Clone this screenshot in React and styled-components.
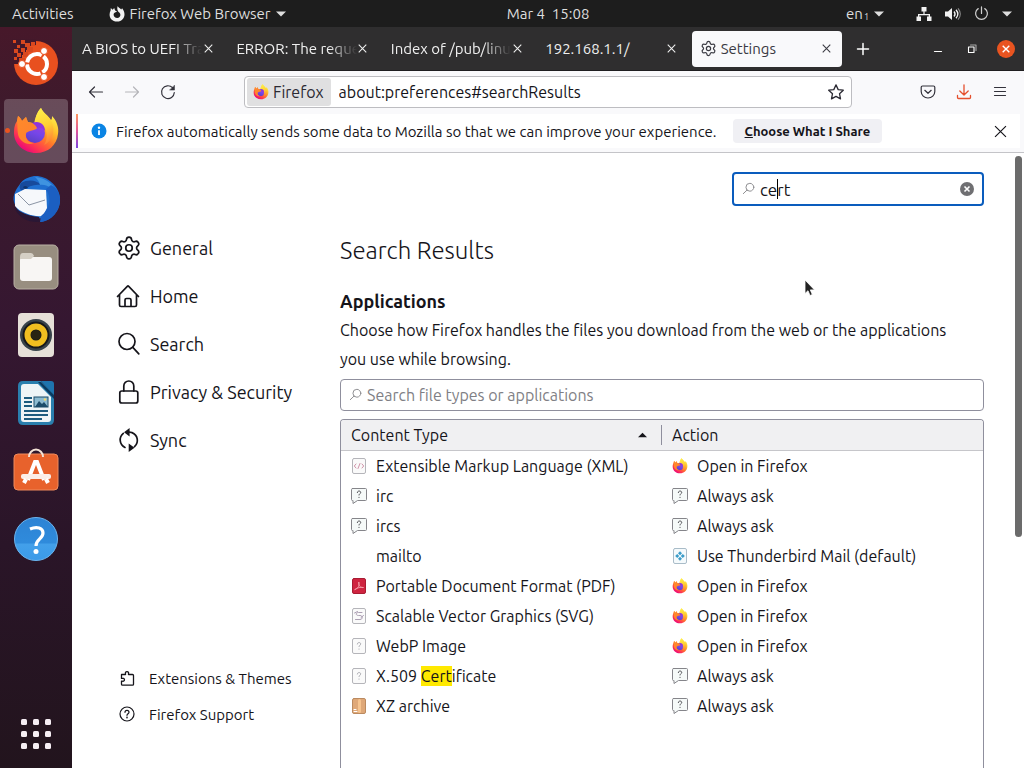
import React, { useState } from "react";
import styled, { createGlobalStyle } from "styled-components";
import { Settings } from "lucide-react";

const GlobalStyle = createGlobalStyle`
  * {
    box-sizing: border-box;
  }

  body {
    margin: 0;
    font-family: Ubuntu, "Noto Sans", "Open Sans", sans-serif;
    font-size: 16px;
    color: #15141a;
  }

  button, input {
    font: inherit;
    color: inherit;
  }

  button {
    border: 0;
    padding: 0;
    background: none;
    cursor: default;
  }

  svg {
    display: block;
    flex-shrink: 0;
  }
`;

/* ---------- layout ---------- */

const Desktop = styled.div`
  height: 100vh;
  display: flex;
  flex-direction: column;
  overflow: hidden;
  background: #1d1d1d;
`;

const Workspace = styled.div`
  flex: 1;
  min-height: 0;
  display: flex;
`;

/* ---------- top panel ---------- */

const TopPanel = styled.header`
  height: 27px;
  flex-shrink: 0;
  display: flex;
  align-items: center;
  padding: 0 12px;
  font-size: 15px;
  color: #dedede;
  background: #1d1d1d;
`;

const PanelStart = styled.div`
  flex: 1 1 72px;
  display: flex;
  align-items: center;
  gap: 35px;
`;

const PanelEnd = styled.div`
  flex: 1 1 0;
  display: flex;
  align-items: center;
  justify-content: flex-end;
  gap: 32px;
`;

const PanelButton = styled.button`
  display: flex;
  align-items: center;
  gap: ${(props) => props.$gap || 5}px;
  white-space: pre;
`;

const Sub = styled.span`
  font-size: 9px;
  align-self: flex-end;
  margin-left: -4px;
`;

/* ---------- dock ---------- */

const Dock = styled.nav`
  width: 72px;
  flex-shrink: 0;
  display: flex;
  flex-direction: column;
  align-items: center;
  gap: 4px;
  padding: 4px 4px 2px;
  background: linear-gradient(#47182a 0, #3d1a2c 12%, #351731 40%, #2a1528 70%, #22141d 100%);
`;

const DockItem = styled.button`
  position: relative;
  width: 64px;
  height: 64px;
  display: flex;
  align-items: center;
  justify-content: center;
  border-radius: 4px;
  background: ${(props) => (props.$active ? "rgba(255, 255, 255, 0.22)" : "none")};
  margin-top: ${(props) => (props.$last ? "auto" : "0")};
`;

const RunningDot = styled.span`
  position: absolute;
  left: 1px;
  top: 29px;
  width: 5px;
  height: 5px;
  border-radius: 50%;
  background: #e95420;
`;

/* ---------- browser chrome ---------- */

const BrowserWindow = styled.div`
  flex: 1;
  min-width: 0;
  display: flex;
  flex-direction: column;
  background: #f9f9fb;
`;

const TabBar = styled.div`
  height: 44px;
  flex-shrink: 0;
  display: flex;
  align-items: center;
  padding: 0 9px 0 2px;
  background: #2f2e2f;
  border-bottom: 1px solid #1f1e20;
`;

const Tabs = styled.div`
  flex: 1;
  min-width: 0;
  display: flex;
  gap: 4px;
`;

const Tab = styled.div`
  flex: 1 1 0;
  min-width: 0;
  height: 36px;
  display: flex;
  align-items: center;
  padding: 0 10px 0 8px;
  border-radius: 4px;
  font-size: 15px;
  color: ${(props) => (props.$active ? "#3a3a42" : "#f0f0f0")};
  background: ${(props) => (props.$active ? "#f9f9fb" : "none")};
`;

const TabLabel = styled.span`
  flex: 1;
  min-width: 0;
  margin-left: ${(props) => (props.$indent ? "4px" : "0")};
  overflow: hidden;
  white-space: nowrap;
  mask-image: ${(props) =>
    props.$fade ? "linear-gradient(to left, transparent, #000 28px)" : "none"};
`;

const IconButton = styled.button`
  width: ${(props) => props.$size || 16}px;
  height: ${(props) => props.$size || 16}px;
  display: flex;
  align-items: center;
  justify-content: center;
  flex-shrink: 0;
`;

const NewTab = styled(IconButton)`
  margin: 0 58px 0 13px;
`;

const WindowControls = styled.div`
  display: flex;
  align-items: center;
  gap: 16px;
`;

const Toolbar = styled.div`
  height: 41px;
  flex-shrink: 0;
  display: flex;
  align-items: center;
  gap: 20px;
  padding: 0 16px;
  color: #33323b;
`;

const UrlBar = styled.div`
  flex: 1;
  min-width: 0;
  height: 32px;
  display: flex;
  align-items: center;
  margin: 0 48px;
  padding: 0 7px 0 2px;
  background: #fff;
  border: 1px solid #bdbdc1;
  border-radius: 4px;
`;

const Identity = styled.button`
  height: 28px;
  display: flex;
  align-items: center;
  gap: 4px;
  padding: 0 7px 0 6px;
  border-radius: 3px;
  background: #e0e0e1;
  font-size: 16px;
  color: #2b2a33;
`;

const UrlInput = styled.input`
  flex: 1;
  min-width: 0;
  padding: 0 8px;
  border: 0;
  outline: 0;
  background: none;
  font-size: 16px;
  color: #15141a;
`;

const Notification = styled.div`
  height: 34px;
  flex-shrink: 0;
  display: flex;
  align-items: center;
  margin: 2px 4px 4px;
  padding: 0 12px 0 13px;
  border-left: 2px solid;
  border-image: linear-gradient(#ff9a5a, #e0559a 50%, #7542e5) 1;
  background: #fff;
  font-size: 15px;
`;

const NotificationText = styled.span`
  margin: 0 16px 0 9px;
  white-space: nowrap;
`;

const NotificationButton = styled.button`
  height: 24px;
  padding: 0 12px;
  margin-right: auto;
  border-radius: 4px;
  background: #f0f0f4;
  font-size: 13px;
  font-weight: 700;
  white-space: nowrap;

  &::first-letter {
    text-decoration: underline;
  }
`;

/* ---------- preferences page ---------- */

const Page = styled.div`
  position: relative;
  flex: 1;
  min-height: 0;
  display: flex;
  overflow: hidden;
  border-top: 1px solid #c4c4c8;
  background: #fff;
`;

const ScrollThumb = styled.div`
  position: absolute;
  top: 3px;
  right: 2px;
  width: 7px;
  height: 62%;
  border-radius: 4px;
  background: #6b6b6b;
`;

const Sidebar = styled.nav`
  width: 268px;
  flex-shrink: 0;
  display: flex;
  flex-direction: column;
  justify-content: space-between;
  padding: 71px 0 36px 44px;
`;

const LinkList = styled.div`
  display: flex;
  flex-direction: column;
`;

const CategoryLink = styled.a`
  height: 48px;
  display: flex;
  align-items: center;
  gap: 8px;
  font-size: 18px;
  color: inherit;
  text-decoration: none;
`;

const FooterLink = styled.a`
  height: 36px;
  display: flex;
  align-items: center;
  gap: 14px;
  padding-left: 3px;
  font-size: 15px;
  color: inherit;
  text-decoration: none;
`;

const Main = styled.main`
  flex: 1;
  min-width: 0;
  display: flex;
  flex-direction: column;
  margin-right: 40px;
  padding-top: 19px;
`;

const SearchField = styled.label`
  position: relative;
  width: 252px;
  height: 34px;
  align-self: flex-end;
  display: flex;
  align-items: center;
  padding: 0 7px 0 8px;
  border: 2px solid #0a5cbd;
  border-radius: 4px;
`;

const FieldInput = styled.input`
  flex: 1;
  min-width: 0;
  padding: 0 4px;
  border: 0;
  outline: 0;
  background: none;
  font-size: ${(props) => (props.$large ? "17px" : "16px")};

  &::placeholder {
    color: #7f7f85;
    opacity: 1;
  }
`;

const TextCaret = styled.span`
  position: absolute;
  left: 43px;
  top: 5px;
  width: 1px;
  height: 20px;
  background: #000;
`;

const PageTitle = styled.h1`
  margin: 29px 0 0;
  font-size: 24px;
  font-weight: 300;
  line-height: 32px;
`;

const SectionTitle = styled.h2`
  margin: 21px 0 0;
  font-size: 18px;
  font-weight: 700;
  line-height: 26px;
`;

const Description = styled.p`
  margin: 2px 0 5px;
  padding-right: 24px;
  font-size: 16px;
  line-height: 29px;
`;

const FilterField = styled.label`
  height: 32px;
  flex-shrink: 0;
  display: flex;
  align-items: center;
  padding: 0 8px;
  border: 1px solid #8f8f9d;
  border-radius: 4px;
`;

const TableFrame = styled.div`
  flex: 1;
  min-height: 0;
  margin-top: 8px;
  border: 1px solid #8f8f9d;
  border-bottom: 0;
  border-radius: 4px 4px 0 0;
  overflow: hidden;
`;

const HandlersTable = styled.table`
  width: 100%;
  border-collapse: separate;
  border-spacing: 0;
  table-layout: fixed;
`;

const HeadCell = styled.th`
  height: 31px;
  padding: 0 0 0 10px;
  border-bottom: 1px solid #c6c6ca;
  background: #f0f0f2;
  font-weight: 400;
  text-align: left;
`;

const SortHeader = styled.div`
  height: 20px;
  display: flex;
  align-items: center;
  justify-content: space-between;
  padding-right: 14px;
  border-right: 1px solid #8f8f9d;
`;

const Cell = styled.td`
  height: 30px;
  padding: 0 0 0 10px;
`;

const CellContent = styled.div`
  display: flex;
  align-items: center;
  gap: 9px;
  height: 20px;
  line-height: 20px;
  white-space: nowrap;
`;

const IconSlot = styled.span`
  width: 16px;
  height: 16px;
  flex-shrink: 0;
`;

const Highlight = styled.mark`
  padding: 1px 0;
  color: inherit;
  background: #ffe900;
`;

const Pointer = styled.div`
  position: fixed;
  left: 804px;
  top: 279px;
  pointer-events: none;
`;

/* ---------- icons ---------- */

const FirefoxLogo = ({ size, id }) => (
  <svg width={size} height={size} viewBox="0 0 48 48" aria-hidden="true">
    <defs>
      <linearGradient id={`${id}-body`} x1="0.85" y1="0.1" x2="0.25" y2="0.95">
        <stop offset="0" stopColor="#fff44f" />
        <stop offset="0.3" stopColor="#ffc02c" />
        <stop offset="0.55" stopColor="#ff7a2a" />
        <stop offset="0.8" stopColor="#ff3750" />
        <stop offset="1" stopColor="#eb0878" />
      </linearGradient>
      <linearGradient id={`${id}-globe`} x1="0.7" y1="0" x2="0.3" y2="1">
        <stop offset="0" stopColor="#a03be1" />
        <stop offset="0.5" stopColor="#7546e8" />
        <stop offset="1" stopColor="#5a3fc4" />
      </linearGradient>
      <linearGradient id={`${id}-ear`} x1="0" y1="0" x2="1" y2="1">
        <stop offset="0" stopColor="#ff8a2a" />
        <stop offset="1" stopColor="#ff8030" />
      </linearGradient>
      <linearGradient id={`${id}-flame`} x1="0.4" y1="0" x2="0.6" y2="1">
        <stop offset="0" stopColor="#fff04a" />
        <stop offset="0.5" stopColor="#ffd034" />
        <stop offset="1" stopColor="#ff7a38" />
      </linearGradient>
    </defs>
    <path
      fill={`url(#${id}-body)`}
      d="M29 1c2 5 7 7 10 12 1-1 1-2 1-4 5 5 7 12 6 18C45 38 36 46 24 46S2 37 2 26c0-6 1-9 3-12l1-5c2 1 3 3 4 5l4-4 2 5c3 0 5 1 7 2 0-6 2-12 6-16z"
    />
    <circle cx="23" cy="26" r="10" fill={`url(#${id}-globe)`} />
    <path
      fill={`url(#${id}-flame)`}
      d="M29 1c2 5 7 7 10 13 5 9 2 20-7 24 4-6 4-14-1-19-2-2-5-2-9-2 1-6 3-12 7-16z"
    />
    <path fill="#8f35dc" d="M20 16c7-3 13 1 13 8-2-3-4-4-8-3-1-2-3-4-5-5z" />
    <path
      fill={`url(#${id}-ear)`}
      d="M5 14l1-5c2 1 3 3 4 5l4-4 2 6c4-1 7 1 9 5-1 2-5 2-7 3-2 1-4 1-4 3-1 5 3 9 8 9-7 3-15-2-16-9-1-5 0-8-1-13z"
    />
  </svg>
);

const FirefoxMono = () => (
  <svg width="16" height="16" viewBox="0 0 16 16" aria-hidden="true">
    <path
      fill="#f2f2f2"
      d="M8.800 0c.2 1.600 2.200 2 3.400 3.600l.9-1.400c4.600 5 2.400 13.400-5 13.400C1.500 15.600-1 9.500 1.600 4.500L1.800 2l1.800 1.700L5.200 2l.9 2.600 1.900.8c-.6 1-2.400.6-3 1.800-1.200 2.300.6 4.700 3.200 4.700 3.400 0 4.300-4 1.700-5.600C8.300 5 7.800 2 8.800 0z"
    />
  </svg>
);

const Caret = ({ up, size = 10 }) => (
  <svg width={size} height="6" viewBox="0 0 10 6" aria-hidden="true">
    <path fill="currentColor" d={up ? "M0 5.5h10L5 .5z" : "M0 .5h10L5 5.5z"} />
  </svg>
);

const Cross = ({ size = 9, width = 1.2 }) => (
  <svg width={size} height={size} viewBox="0 0 10 10" aria-hidden="true">
    <path d="M.8.8l8.4 8.4M9.2.8L.8 9.2" fill="none" stroke="currentColor" strokeWidth={width} />
  </svg>
);

// line icons share stroke settings
const LineIcon = ({ size = 16, box = 16, width = 1.2, color = "currentColor", children }) => (
  <svg
    width={size}
    height={size}
    viewBox={`0 0 ${box} ${box}`}
    fill="none"
    stroke={color}
    strokeWidth={width}
    strokeLinecap="round"
    strokeLinejoin="round"
    aria-hidden="true"
  >
    {children}
  </svg>
);

const NetworkIcon = () => (
  <svg width="16" height="14" viewBox="0 0 16 14" fill="#f2f2f2" aria-hidden="true">
    <path d="M5.500 0h5v4.500H8.600V7H14v2.500h1.500V14h-4.500V9.500h1.700V8.300H3.300v1.200H5V14H.5V9.500H2V7h5.400V4.500H5.500z" />
  </svg>
);

const VolumeIcon = () => (
  <svg width="16" height="14" viewBox="0 0 16 14" aria-hidden="true">
    <path fill="#f2f2f2" d="M0 4.500h3L7 1v12L3 9.500H0z" />
    <path
      d="M9 4.500c1.300 1.500 1.300 3.500 0 5M11 2.800c2.300 2.600 2.300 5.800 0 8.400"
      fill="none"
      stroke="#f2f2f2"
      strokeWidth="1.300"
    />
    <path d="M13 1.300c3 3.500 3 8 0 11.400" fill="none" stroke="#8a8a8a" strokeWidth="1.200" />
  </svg>
);

const PowerIcon = () => (
  <LineIcon size={15} color="#d0d0d0" width={1.3}>
    <path d="M8 1v7M4.500 2.800a6.300 6.300 0 1 0 7 0" />
  </LineIcon>
);

const UbuntuLogo = () => (
  <svg width="48" height="48" viewBox="0 0 48 48" aria-hidden="true">
    <circle cx="24" cy="24" r="22" fill="#e8501f" />
    <path fill="#43182a" d="M0 0h24v6l-6 1v4h-4v5h-4v5l-4 4H0z" />
    <g fill="#d8481f">
      <path d="M1 1h3v3H1zM9 1h4v4H9zM5 6h3v3H5zM13 4h5v4h-5zM19 3h4v4h-4zM2 10h4v4H2zM9 9h4v4H9zM5 14h4v4H5zM15 8h6v5h-6zM11 13h5v5h-5zM2 18h3v3H2zM7 19h6v5H7z" />
    </g>
    <circle
      cx="25"
      cy="25"
      r="10"
      fill="none"
      stroke="#fff"
      strokeWidth="4"
      strokeDasharray="18.940 2"
      strokeDashoffset="9"
    />
    <g fill="#fff" stroke="#e8501f" strokeWidth="1">
      <circle cx="10" cy="25" r="3.500" />
      <circle cx="32" cy="12" r="3.500" />
      <circle cx="32" cy="38" r="3.500" />
    </g>
  </svg>
);

const ThunderbirdLogo = () => (
  <svg width="50" height="50" viewBox="0 0 50 50" aria-hidden="true">
    <path
      fill="#1f6fd0"
      d="M9 10c3-5 9-7 14-8 12-1 25 9 26 22 1 13-9 23-20 24l4-4C18 46 6 40 3 28 1 21 6 14 9 10z"
    />
    <path fill="#174a9c" d="M10 9c7-4 16-3 20 2-6-1-13 1-18 6-4-1-4-5-2-8z" />
    <path fill="#3f93e0" d="M24 3c12 1 22 9 22 21-3-10-11-14-17-13-1-4-3-6-5-8z" />
    <path fill="#f6f8fb" d="M4 20l10-5 21 1 1 18-4 8C20 43 9 38 4 32z" />
    <path d="M7 20l11 11 16-5" fill="none" stroke="#8b95a5" strokeWidth="1" />
    <path fill="#2a1735" d="M3 33c5 5 14 9 25 10l1 5C16 49 7 43 3 33z" />
    <path fill="#1b5fc2" d="M35 15c6 9 4 20-5 27l-1 6c12-1 20-11 20-23 0-7-5-12-9-14z" />
    <path fill="#0e336e" d="M12 13c2-2 4-1 5 1-2 1-4 1-5-1z" />
  </svg>
);

const FilesLogo = () => (
  <svg width="46" height="46" viewBox="0 0 46 46" aria-hidden="true">
    <rect x="1" y="1" width="44" height="44" rx="5" fill="#988e80" stroke="#b9b0a4" />
    <rect x="7" y="13" width="32" height="24" rx="3" fill="#f8f6f4" />
    <path fill="#d5cfc5" d="M7 15v-2q0-4 3-4h8q2 0 3 3l-3 3z" />
  </svg>
);

const RhythmboxLogo = () => (
  <svg width="38" height="46" viewBox="0 0 38 46" aria-hidden="true">
    <rect x="1" y="1" width="36" height="44" rx="4" fill="#e6e0d8" />
    <circle cx="19" cy="23" r="16" fill="#38434a" />
    <circle cx="19" cy="23" r="13.500" fill="#17191b" />
    <circle cx="19" cy="23" r="8.500" fill="none" stroke="#f0bf20" strokeWidth="6" />
    <circle cx="19" cy="23" r="5" fill="#2a2412" />
  </svg>
);

const WriterLogo = () => (
  <svg width="38" height="46" viewBox="0 0 38 46" aria-hidden="true">
    <path fill="#2a7fae" d="M6 1h18l13 13v26q0 5-5 5H6q-5 0-5-5V6q0-5 5-5z" />
    <path fill="#eef4f6" d="M7 4h14l13 13v22q0 3-3 3H7q-3 0-3-3V7q0-3 3-3z" />
    <path fill="#1f74ae" d="M24 1h10q3 0 3 3v11z" />
    <path fill="#0b3a60" d="M21 2h3l13 13v4z" />
    <path
      d="M7 18h8M7 22h8M7 26h8M7 31h24M7 35h24M7 39h18"
      stroke="#1c5b7e"
      strokeWidth="2"
      fill="none"
    />
    <rect x="17" y="17" width="14" height="10" fill="#8dbbd0" stroke="#1c4c69" />
    <path fill="#1c4c69" d="M18 27l4-6 3 3 2-2 4 5z" />
    <circle cx="28" cy="19.500" r="1.300" fill="#f1d770" />
  </svg>
);

const SoftwareLogo = () => (
  <svg width="46" height="46" viewBox="0 0 46 46" aria-hidden="true">
    <rect x="1" y="6" width="44" height="36" rx="4" fill="#e8622c" stroke="#ef8a5c" />
    <path d="M16 9a7 7.500 0 0 1 14 0" fill="none" stroke="#f3e2d6" strokeWidth="2" />
    <path d="M15 32l7-18h2l7 18" fill="none" stroke="#fff" strokeWidth="4" />
    <rect x="8" y="26" width="30" height="5" rx="2" fill="#fbeee8" />
    <path d="M13 31l-2 4M33 31l2 4" stroke="#fff" strokeWidth="4" />
  </svg>
);

const HelpLogo = () => (
  <svg width="46" height="46" viewBox="0 0 46 46" aria-hidden="true">
    <defs>
      <linearGradient id="help-bg" x1="0" y1="0" x2="0" y2="1">
        <stop offset="0" stopColor="#2d83d4" />
        <stop offset="0.600" stopColor="#2f8bdc" />
        <stop offset="0.610" stopColor="#43a0ea" />
        <stop offset="1" stopColor="#3b9ae8" />
      </linearGradient>
    </defs>
    <circle cx="23" cy="23" r="21.500" fill="url(#help-bg)" stroke="#6bb4ee" />
    <path
      d="M17 13c7-3 13-1 13 4 0 6-7 6-7 13"
      fill="none"
      stroke="#fff"
      strokeWidth="3.200"
    />
    <circle cx="23" cy="35.500" r="2.500" fill="#fff" />
  </svg>
);

const AppGridIcon = () => (
  <svg width="32" height="32" viewBox="0 0 32 32" fill="#f6eef4" aria-hidden="true">
    {[1, 13, 25].map((y) =>
      [1, 13, 25].map((x) => <rect key={`${x}-${y}`} x={x} y={y} width="6" height="6" rx="1.500" />)
    )}
  </svg>
);

const StarIcon = () => (
  <LineIcon width={1.3} color="#2b2a33">
    <path d="M8 .9l2.200 4.700 5.100.6-3.800 3.500 1 5.200L8 12.400l-4.500 2.500 1-5.200L.7 6.200l5.100-.6z" />
  </LineIcon>
);

const HomeIcon = () => (
  <LineIcon size={26} box={26} width={1.700}>
    <path d="M1.500 13.500L11.300 3.300q.7-.7 1.400 0l9.800 10.200M3.500 11.500V22q0 1.500 1.500 1.500h14q1.500 0 1.500-1.500V11.500M9 23v-6q0-1.500 1.500-1.500h3Q15 15.500 15 17v6" />
  </LineIcon>
);

const SearchIcon = () => (
  <LineIcon size={26} box={26} width={1.700}>
    <circle cx="11" cy="10.500" r="8" />
    <path d="M16.800 16.300l6 6.500" />
  </LineIcon>
);

const LockIcon = () => (
  <LineIcon size={26} box={26} width={1.700}>
    <rect x="3.800" y="12" width="18" height="12" rx="2" />
    <path d="M7.800 12V7a5 5 0 0 1 10 0v5" />
  </LineIcon>
);

const SyncIcon = () => (
  <LineIcon size={26} box={26} width={1.700}>
    <path d="M7.300 6.400A8.300 8.300 0 0 0 9 20.400M18.500 19.600A8.300 8.300 0 0 0 16 5.600L13 5" />
    <path fill="currentColor" stroke="none" d="M13.600 1v8.400L8 5.200zM12.700 16.600V25l5.800-4.200z" />
  </LineIcon>
);

const PuzzleIcon = () => (
  <LineIcon width={1.300}>
    <path d="M2.500 6.200V4.500h4c.3-.8-.4-1 0-2 .5-1.300 2.500-1.300 3 0 .4 1-.3 1.200 0 2h4q1 0 1 1v8.700q0 1-1 1h-10q-1 0-1-1v-3c.8-.3 1 .4 2 0 1.300-.5 1.300-2.300 0-2.800-1-.4-1.200.3-2 0z" />
  </LineIcon>
);

const QuestionCircle = () => (
  <LineIcon width={1.200}>
    <circle cx="8" cy="8" r="7" />
    <path d="M6 6.300c0-2.600 4-2.600 4 0 0 1.400-2 1.500-2 3" />
    <circle cx="8" cy="11.500" r=".3" />
  </LineIcon>
);

const SmallSearch = () => (
  <LineIcon size={14} width={1.100} color="#8a8a8e">
    <circle cx="9" cy="6" r="4.500" />
    <path d="M5.800 9.200L1.500 13.300" />
  </LineIcon>
);

const AskIcon = () => (
  <LineIcon width={1} color="#85858a">
    <path fill="#f6faf9" d="M1.500.5h13q1 0 1 1v10q0 1-1 1h-8l-4.500 3v-3h-.5q-1 0-1-1v-10q0-1 1-1z" />
    <path stroke="#4a4a50" d="M6.300 4.500c0-2 3.400-2 3.400 0 0 1.200-1.700 1.200-1.700 2.500M8 9.300v.2" />
  </LineIcon>
);

const DocIcon = ({ fill = "#fafafa", stroke = "#b5b5ba", children }) => (
  <LineIcon width={1} color={stroke}>
    <rect x="1.500" y=".5" width="13" height="15" rx="1.500" fill={fill} />
    {children}
  </LineIcon>
);

const fileIcons = {
  xml: (
    <DocIcon>
      <path stroke="#d092a8" d="M5 6L3.300 8 5 10M11 6l1.700 2L11 10M9 5.500l-2 5" />
    </DocIcon>
  ),
  pdf: (
    <DocIcon fill="#cf2440" stroke="#a81c33">
      <path
        stroke="#f6a9b3"
        strokeWidth=".8"
        d="M4 11.500c3-1 5-4 3.800-7.500-.8 3 1.200 6 4.700 5.500-3-.5-6 0-8.500 2z"
      />
    </DocIcon>
  ),
  svg: (
    <DocIcon>
      <path
        stroke="#a394aa"
        strokeWidth=".9"
        d="M11 4.500H7.500c-3 0-3 3 0 3h1.500c3 0 3 4 0 4H4.500M3.500 5l3-1.500M10 9.500l2.500-2"
      />
    </DocIcon>
  ),
  unknown: (
    <DocIcon>
      <path stroke="#a9a9b0" d="M6.300 6c0-2 3.400-2 3.400 0 0 1.200-1.700 1.200-1.700 2.500M8 11v.2" />
    </DocIcon>
  ),
  archive: (
    <DocIcon fill="#dfa878" stroke="#bb8a60">
      <path stroke="#f6c48f" strokeWidth="3" d="M8.500 2.500v11" />
      <path stroke="#fff" d="M3 11.500h2M3 13.500h3" />
    </DocIcon>
  ),
  mail: (
    <DocIcon fill="#f5fafc" stroke="#a9bcc8">
      <path
        fill="#3a9cc9"
        stroke="none"
        d="M8 3.200L10 5.200 8 7.200 6 5.200zM8 8.800l2 2-2 2-2-2zM5.200 6l2 2-2 2-2-2zM10.800 6l2 2-2 2-2-2z"
      />
    </DocIcon>
  ),
  ask: <AskIcon />,
};

/* ---------- data ---------- */

const tabs = ["A BIOS to UEFI Tra", "ERROR: The reque", "Index of /pub/linu", "192.168.1.1/"];

const dockApps = [
  { name: "Ubuntu", icon: <UbuntuLogo /> },
  { name: "Firefox", icon: <FirefoxLogo size={48} id="dock" />, active: true },
  { name: "Thunderbird", icon: <ThunderbirdLogo /> },
  { name: "Files", icon: <FilesLogo /> },
  { name: "Rhythmbox", icon: <RhythmboxLogo /> },
  { name: "Writer", icon: <WriterLogo /> },
  { name: "Software", icon: <SoftwareLogo /> },
  { name: "Help", icon: <HelpLogo /> },
];

const categories = [
  { name: "General", icon: <Settings size={26} strokeWidth={1.6} /> },
  { name: "Home", icon: <HomeIcon /> },
  { name: "Search", icon: <SearchIcon /> },
  { name: "Privacy & Security", icon: <LockIcon /> },
  { name: "Sync", icon: <SyncIcon /> },
];

const handlers = [
  { type: "Extensible Markup Language (XML)", icon: "xml", action: "Open in Firefox" },
  { type: "irc", icon: "ask", action: "Always ask" },
  { type: "ircs", icon: "ask", action: "Always ask" },
  { type: "mailto", action: "Use Thunderbird Mail (default)" },
  { type: "Portable Document Format (PDF)", icon: "pdf", action: "Open in Firefox" },
  { type: "Scalable Vector Graphics (SVG)", icon: "svg", action: "Open in Firefox" },
  { type: "WebP Image", icon: "unknown", action: "Open in Firefox" },
  { type: "X.509 Certificate", icon: "unknown", action: "Always ask" },
  { type: "XZ archive", icon: "archive", action: "Always ask" },
];

const actionIcon = (action, index) => {
  if (action === "Open in Firefox") return <FirefoxLogo size={16} id={`row-${index}`} />;
  if (action === "Always ask") return <AskIcon />;
  return fileIcons.mail;
};

const MarkedText = ({ text, query }) => {
  const start = query ? text.toLowerCase().indexOf(query.toLowerCase()) : -1;
  if (start < 0) return <span>{text}</span>;
  const end = start + query.length;
  return (
    <span>
      {text.slice(0, start)}
      <Highlight>{text.slice(start, end)}</Highlight>
      {text.slice(end)}
    </span>
  );
};

/* ---------- sections ---------- */

const Panel = () => (
  <TopPanel>
    <PanelStart>
      <PanelButton>Activities</PanelButton>
      <PanelButton>
        <FirefoxMono />
        Firefox Web Browser
        <Caret />
      </PanelButton>
    </PanelStart>
    <PanelButton>{"Mar 4  15:08"}</PanelButton>
    <PanelEnd>
      <PanelButton>
        en<Sub>1</Sub>
        <Caret />
      </PanelButton>
      <PanelButton $gap={13} aria-label="System menu">
        <NetworkIcon />
        <VolumeIcon />
        <PowerIcon />
        <Caret />
      </PanelButton>
    </PanelEnd>
  </TopPanel>
);

const Launcher = () => (
  <Dock>
    {dockApps.map((app) => (
      <DockItem key={app.name} $active={app.active} aria-label={app.name}>
        {app.active && <RunningDot />}
        {app.icon}
      </DockItem>
    ))}
    <DockItem $last aria-label="Show Applications">
      <AppGridIcon />
    </DockItem>
  </Dock>
);

const BrowserTabs = () => (
  <TabBar>
    <Tabs>
      {tabs.map((title, i) => (
        <Tab key={title}>
          <TabLabel $fade={i < 3}>{title}</TabLabel>
          <IconButton $size={12} aria-label="Close tab">
            <Cross />
          </IconButton>
        </Tab>
      ))}
      <Tab $active>
        <Settings size={17} strokeWidth={1.7} />
        <TabLabel $indent>Settings</TabLabel>
        <IconButton $size={12} aria-label="Close tab">
          <Cross />
        </IconButton>
      </Tab>
    </Tabs>
    <NewTab aria-label="New tab">
      <LineIcon color="#fff" width={1.5}>
        <path d="M8 2.500v11M2.500 8h11" />
      </LineIcon>
    </NewTab>
    <WindowControls>
      <IconButton $size={18} aria-label="Minimize">
        <LineIcon color="#fff">
          <path d="M4.500 10.500h7" />
        </LineIcon>
      </IconButton>
      <IconButton $size={18} aria-label="Restore">
        <LineIcon color="#fff" width={1.100}>
          <rect x="4.500" y="6" width="5.500" height="5.500" />
          <path stroke="#a8a8a8" d="M6.500 4h5.500v5.500" />
        </LineIcon>
      </IconButton>
      <IconButton $size={18} aria-label="Close window">
        <svg width="18" height="18" viewBox="0 0 18 18" aria-hidden="true">
          <circle cx="9" cy="9" r="9" fill="#e95420" />
          <path d="M5.700 5.700l6.600 6.600M12.300 5.700l-6.600 6.600" stroke="#fff" strokeWidth="1.400" />
        </svg>
      </IconButton>
    </WindowControls>
  </TabBar>
);

const NavigationBar = () => (
  <Toolbar>
    <IconButton aria-label="Back">
      <LineIcon width={1.200}>
        <path d="M14.500 8h-13M6.500 3l-5 5 5 5" />
      </LineIcon>
    </IconButton>
    <IconButton aria-label="Forward">
      <LineIcon width={1.200} color="#b5b5b9">
        <path d="M1.500 8h13M9.500 3l5 5-5 5" />
      </LineIcon>
    </IconButton>
    <IconButton aria-label="Reload">
      <LineIcon width={1.200}>
        <path d="M14.300 8.500A6.400 6.400 0 1 1 12.500 3.700" />
        <path fill="currentColor" strokeWidth=".5" d="M14.500 1.500v4.600H9.900z" />
      </LineIcon>
    </IconButton>
    <UrlBar>
      <Identity>
        <FirefoxLogo size={16} id="identity" />
        Firefox
      </Identity>
      <UrlInput aria-label="Address" defaultValue="about:preferences#searchResults" />
      <IconButton aria-label="Bookmark this page">
        <StarIcon />
      </IconButton>
    </UrlBar>
    <IconButton aria-label="Save to Pocket">
      <LineIcon width={1.200}>
        <path d="M2.500 2h11q1.300 0 1.300 1.300V7.500a6.800 6.500 0 0 1-13.600 0V3.300Q1.200 2 2.500 2zM4.800 6.300L8 9.300l3.200-3" />
      </LineIcon>
    </IconButton>
    <IconButton aria-label="Downloads">
      <LineIcon width={1.300} color="#e5502e">
        <path d="M8 .8v10M3.800 7L8 11l4.200-4M1.500 11.500v2q0 1 1 1h11q1 0 1-1v-2" />
      </LineIcon>
    </IconButton>
    <IconButton aria-label="Menu">
      <LineIcon width={1.200}>
        <path d="M2.500 3.500h11M2.500 7.500h11M2.500 11.500h11" />
      </LineIcon>
    </IconButton>
  </Toolbar>
);

const DataNotice = () => (
  <Notification>
    <svg width="16" height="16" viewBox="0 0 16 16" aria-hidden="true">
      <circle cx="8" cy="8" r="7.500" fill="#0a84e4" />
      <path d="M8 7.300v4.700" stroke="#fff" strokeWidth="1.800" />
      <circle cx="8" cy="4.800" r="1.200" fill="#fff" />
    </svg>
    <NotificationText>
      Firefox automatically sends some data to Mozilla so that we can improve your experience.
    </NotificationText>
    <NotificationButton>Choose What I Share</NotificationButton>
    <IconButton aria-label="Dismiss">
      <Cross size={13} width={0.9} />
    </IconButton>
  </Notification>
);

const Categories = () => (
  <Sidebar>
    <LinkList>
      {categories.map((category) => (
        <CategoryLink key={category.name} href="#">
          {category.icon}
          {category.name}
        </CategoryLink>
      ))}
    </LinkList>
    <LinkList>
      <FooterLink href="#">
        <PuzzleIcon />
        Extensions &amp; Themes
      </FooterLink>
      <FooterLink href="#">
        <QuestionCircle />
        Firefox Support
      </FooterLink>
    </LinkList>
  </Sidebar>
);

const SearchResults = () => {
  const [query, setQuery] = useState("cert");

  return (
    <Main>
      <SearchField>
        <SmallSearch />
        <FieldInput
          $large
          aria-label="Find in Settings"
          value={query}
          onChange={(e) => setQuery(e.target.value)}
        />
        <TextCaret />
        <IconButton aria-label="Clear" onClick={() => setQuery("")}>
          <svg width="14" height="14" viewBox="0 0 14 14" aria-hidden="true">
            <circle cx="7" cy="7" r="7" fill="#6f6f72" />
            <path d="M4.500 4.500l5 5M9.500 4.500l-5 5" stroke="#fff" strokeWidth="1.600" />
          </svg>
        </IconButton>
      </SearchField>
      <PageTitle>Search Results</PageTitle>
      <SectionTitle>Applications</SectionTitle>
      <Description>
        Choose how Firefox handles the files you download from the web or the applications you use
        while browsing.
      </Description>
      <FilterField>
        <SmallSearch />
        <FieldInput
          aria-label="Search file types or applications"
          placeholder="Search file types or applications"
        />
      </FilterField>
      <TableFrame>
        <HandlersTable>
          <thead>
            <tr>
              <HeadCell scope="col">
                <SortHeader>
                  Content Type
                  <Caret up size={9} />
                </SortHeader>
              </HeadCell>
              <HeadCell scope="col">Action</HeadCell>
            </tr>
          </thead>
          <tbody>
            {handlers.map((row, i) => (
              <tr key={row.type}>
                <Cell>
                  <CellContent>
                    <IconSlot>{fileIcons[row.icon]}</IconSlot>
                    <MarkedText text={row.type} query={query} />
                  </CellContent>
                </Cell>
                <Cell>
                  <CellContent>
                    <IconSlot>{actionIcon(row.action, i)}</IconSlot>
                    {row.action}
                  </CellContent>
                </Cell>
              </tr>
            ))}
          </tbody>
        </HandlersTable>
      </TableFrame>
    </Main>
  );
};

const App = () => (
  <Desktop>
    <GlobalStyle />
    <Panel />
    <Workspace>
      <Launcher />
      <BrowserWindow>
        <BrowserTabs />
        <NavigationBar />
        <DataNotice />
        <Page>
          <Categories />
          <SearchResults />
          <ScrollThumb />
        </Page>
      </BrowserWindow>
    </Workspace>
    <Pointer>
      <svg width="12" height="18" viewBox="0 0 12 18" aria-hidden="true">
        <path
          d="M1 1v13.500l3-2.800 2 4.800 2.300-1-2-4.600h4.200z"
          fill="#222"
          stroke="#fff"
          strokeWidth=".8"
        />
      </svg>
    </Pointer>
  </Desktop>
);

export default App;
